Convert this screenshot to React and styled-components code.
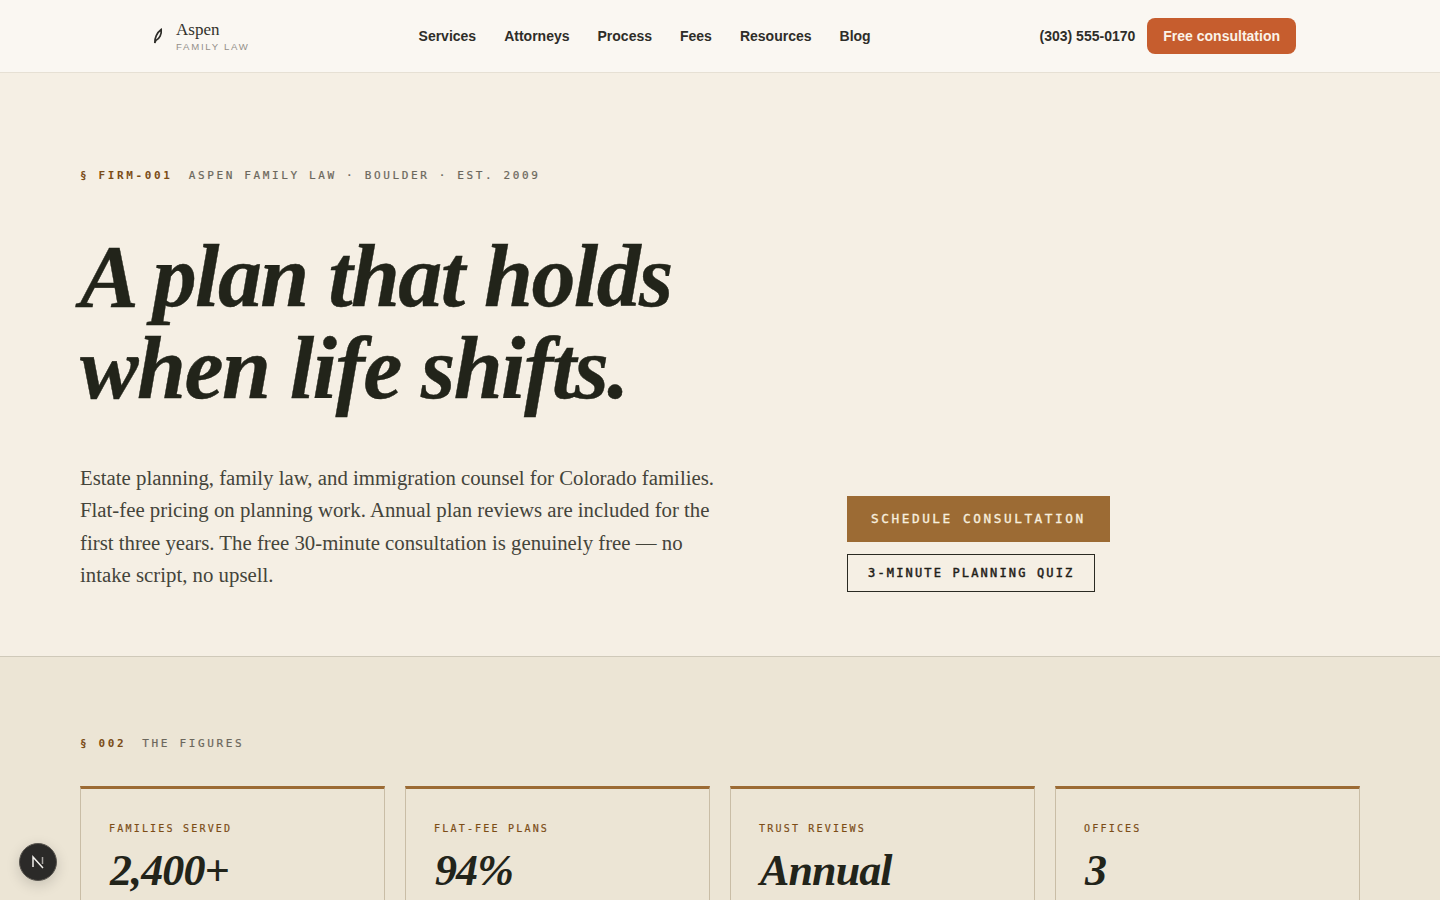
import React from "react";
import styled, { createGlobalStyle } from "styled-components";

const mono = `"DejaVu Sans Mono", "Liberation Mono", monospace`;
const serif = `"Liberation Serif", serif`;
const sans = `"Liberation Sans", Arial, sans-serif`;

const GlobalStyle = createGlobalStyle`
  * { box-sizing: border-box; }
  html, body { margin: 0; padding: 0; background: #f5efe4; }
  body { height: 900px; overflow: hidden; }
`;

const Header = styled.header`
  height: 73px;
  background: #faf7f2;
  border-bottom: 1px solid #e6e0d4;
  display: flex;
  justify-content: center;
`;

const HeaderInner = styled.div`
  width: 1152px;
  display: flex;
  align-items: center;
  justify-content: space-between;
`;

const Logo = styled.a`
  display: flex;
  align-items: center;
  gap: 12px;
  padding-left: 8px;
`;

const LogoText = styled.div`
  display: flex;
  flex-direction: column;
`;

const LogoName = styled.span`
  font-family: ${serif};
  font-size: 17px;
  line-height: 19px;
  color: #33322c;
`;

const LogoSub = styled.span`
  font-family: ${sans};
  font-size: 9.6px;
  line-height: 12px;
  letter-spacing: 0.18em;
  margin-top: 2px;
  color: #94908a;
`;

const Nav = styled.nav`
  display: flex;
  gap: 28px;
`;

const NavLink = styled.a`
  font-family: ${sans};
  font-size: 14px;
  font-weight: 700;
  color: #2e2d29;
`;

const HeaderRight = styled.div`
  display: flex;
  align-items: center;
  gap: 12px;
`;

const Phone = styled.a`
  font-family: ${sans};
  font-size: 14px;
  font-weight: 700;
  color: #2e2d29;
`;

const CtaButton = styled.a`
  height: 36px;
  padding: 0 16px;
  display: flex;
  align-items: center;
  border-radius: 8px;
  background: #c65d2e;
  color: #fbf3e8;
  font-family: ${sans};
  font-size: 14px;
  font-weight: 700;
`;

const Hero = styled.section`
  height: 584px;
  padding: 96px 80px 64px;
  border-bottom: 1px solid #cfc9b9;
  background: #f5efe4;
`;

const Eyebrow = styled.div`
  display: flex;
  gap: 16px;
  font-family: ${mono};
  font-size: 11px;
  line-height: 13px;
  letter-spacing: 0.24em;
  color: #6b675c;
  -webkit-text-stroke: 0.2px #6b675c;
`;

const EyebrowMark = styled.span`
  color: #7c4d17;
  font-weight: 700;
  -webkit-text-stroke: 0;
`;

const Headline = styled.h1`
  margin: 49px 0 0;
  font-family: ${serif};
  font-style: italic;
  font-weight: 700;
  font-size: 88px;
  line-height: 92.4px;
  letter-spacing: -0.018em;
  color: #22241a;
  -webkit-text-stroke: 0.4px #22241a;
`;

const HeroGrid = styled.div`
  display: grid;
  grid-template-columns: 767px 1fr;
  align-items: end;
  margin-top: 46.2px;
`;

const Lede = styled.p`
  margin: 0;
  width: 650px;
  font-family: ${serif};
  font-size: 20.8px;
  line-height: 32.4px;
  color: #44443a;
`;

const Actions = styled.div`
  display: flex;
  flex-direction: column;
  align-items: flex-start;
  gap: 12px;
`;

const ActionButton = styled.a`
  display: flex;
  align-items: center;
  font-family: ${mono};
  font-size: ${(p) => (p.$solid ? "12.75px" : "12px")};
  letter-spacing: ${(p) => (p.$solid ? "0.2em" : "0.18em")};
  height: ${(p) => (p.$solid ? "46px" : "38px")};
  padding: 0 ${(p) => (p.$solid ? "24px" : "20px")};
  background: ${(p) => (p.$solid ? "#9c6b34" : "transparent")};
  color: ${(p) => (p.$solid ? "#f8efdf" : "#1f2018")};
  border: ${(p) => (p.$solid ? "none" : "1px solid #2a2a22")};
  -webkit-text-stroke: ${(p) => (p.$solid ? "0.3px" : "0.45px")} currentColor;
`;

const Figures = styled.section`
  background: #ece5d5;
  padding: 80px 80px 0;
  height: 243px;
  overflow: hidden;
`;

const CardGrid = styled.div`
  display: grid;
  grid-template-columns: repeat(4, 305px);
  gap: 20px;
  margin-top: 36px;
`;

const Card = styled.div`
  height: 200px;
  border: 1px solid #c9bda6;
  border-top: 3px solid #9c6b34;
  padding: 34px 28px;
`;

const CardLabel = styled.div`
  font-family: ${mono};
  font-size: 10px;
  line-height: 12px;
  letter-spacing: 0.22em;
  color: #7c4d17;
  -webkit-text-stroke: 0.2px #7c4d17;
`;

const CardValue = styled.div`
  margin-top: 10px;
  padding-left: 1px;
  font-family: ${serif};
  font-style: italic;
  font-weight: 700;
  font-size: 44px;
  line-height: 52px;
  letter-spacing: -0.02em;
  color: #22241a;
`;

const DevBadge = styled.div`
  position: fixed;
  left: 19px;
  bottom: 19px;
  width: 38px;
  height: 38px;
  border-radius: 50%;
  background: #2b2a28;
  border: 1px solid #57544e;
  box-shadow: 0 4px 14px rgba(0, 0, 0, 0.16);
  display: flex;
  align-items: center;
  justify-content: center;
`;

const navItems = ["Services", "Attorneys", "Process", "Fees", "Resources", "Blog"];
const stats = [
  { label: "FAMILIES SERVED", value: "2,400+" },
  { label: "FLAT-FEE PLANS", value: "94%" },
  { label: "TRUST REVIEWS", value: "Annual" },
  { label: "OFFICES", value: "3" },
];

export default function App() {
  return (
    <>
      <GlobalStyle />
      <Header>
        <HeaderInner>
          <Logo>
            <svg width="12" height="18" viewBox="0 0 12 18" fill="none">
              <path d="M2.8 16 C2.4 11.5 5 5.5 9.2 2.5 C9.8 7 7.5 12 3.8 13.5 Z" fill="none" stroke="#2e2d29" strokeWidth="1.7" />
            </svg>
            <LogoText>
              <LogoName>Aspen</LogoName>
              <LogoSub>FAMILY LAW</LogoSub>
            </LogoText>
          </Logo>
          <Nav>
            {navItems.map((n) => (
              <NavLink key={n}>{n}</NavLink>
            ))}
          </Nav>
          <HeaderRight>
            <Phone>(303) 555-0170</Phone>
            <CtaButton>Free consultation</CtaButton>
          </HeaderRight>
        </HeaderInner>
      </Header>
      <Hero>
        <Eyebrow>
          <EyebrowMark>§ FIRM-001</EyebrowMark>
          <span>ASPEN FAMILY LAW · BOULDER · EST. 2009</span>
        </Eyebrow>
        <Headline>
          A plan that holds
          <br />
          when life shifts.
        </Headline>
        <HeroGrid>
          <Lede>
            Estate planning, family law, and immigration counsel for Colorado families. Flat-fee pricing on planning work. Annual plan reviews are included for the first three years. The free 30-minute consultation is genuinely free — no intake script, no upsell.
          </Lede>
          <Actions>
            <ActionButton $solid>SCHEDULE CONSULTATION</ActionButton>
            <ActionButton>3-MINUTE PLANNING QUIZ</ActionButton>
          </Actions>
        </HeroGrid>
      </Hero>
      <Figures>
        <Eyebrow>
          <EyebrowMark>§ 002</EyebrowMark>
          <span>THE FIGURES</span>
        </Eyebrow>
        <CardGrid>
          {stats.map((s) => (
            <Card key={s.label}>
              <CardLabel>{s.label}</CardLabel>
              <CardValue>{s.value}</CardValue>
            </Card>
          ))}
        </CardGrid>
      </Figures>
      <DevBadge>
        <svg width="16" height="16" viewBox="0 0 16 16" fill="none">
          <path d="M3 13V3L13 14" stroke="#f2f0ec" strokeWidth="1.5" />
          <path d="M12.5 3V10" stroke="#a9a7a3" strokeWidth="1.5" />
        </svg>
      </DevBadge>
    </>
  );
}
